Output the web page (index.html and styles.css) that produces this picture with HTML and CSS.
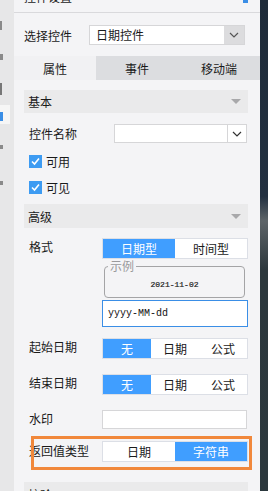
FILE: index.html
```html
<!DOCTYPE html>
<html>
<head>
<meta charset="utf-8">
<link rel="stylesheet" href="styles.css">
</head>
<body>
<div class="app">
  <div class="sidebar">
    <div class="sb-mark m1"></div>
    <div class="sb-mark m2"></div>
    <div class="sb-mark m3"></div>
    <div class="sb-active"><div class="sb-blue"></div></div>
    <div class="sb-mark m4"></div>
    <div class="sb-mark m5"></div>
  </div>
  <div class="panel">
    <div class="title"><span>控件设置</span><i class="title-icon"></i></div>
    <div class="select-row">
      <span class="select-label">选择控件</span>
      <div class="select">
        <span class="select-text">日期控件</span>
        <span class="select-btn"><svg width="10" height="6" viewBox="0 0 10 6"><path d="M1 1 L5 5 L9 1" fill="none" stroke="#555" stroke-width="1.2"/></svg></span>
      </div>
    </div>
    <div class="tabs">
      <div class="tab active">属性</div>
      <div class="tab">事件</div>
      <div class="tab">移动端</div>
    </div>
    <div class="content">
      <div class="section-head"><span>基本</span><i class="tri"></i></div>
      <div class="row-name">
        <span class="label">控件名称</span>
        <div class="combo">
          <span class="combo-btn"><svg width="10" height="6" viewBox="0 0 10 6"><path d="M1 1 L5 5 L9 1" fill="none" stroke="#333" stroke-width="1.2"/></svg></span>
        </div>
      </div>
      <div class="check c1"><span class="box"><svg width="13" height="13" viewBox="0 0 13 13"><path d="M3 6.5 L5.5 9 L10 3.5" fill="none" stroke="#fff" stroke-width="1.6"/></svg></span>可用</div>
      <div class="check c2"><span class="box"><svg width="13" height="13" viewBox="0 0 13 13"><path d="M3 6.5 L5.5 9 L10 3.5" fill="none" stroke="#fff" stroke-width="1.6"/></svg></span>可见</div>

      <div class="section-head adv"><span>高级</span><i class="tri"></i></div>

      <div class="row r-format">
        <span class="label">格式</span>
        <div class="ctrl">
          <div class="seg two">
            <span class="on">日期型</span><span>时间型</span>
          </div>
          <fieldset class="example">
            <legend>示例</legend>
            <div class="example-date">2021-11-02</div>
          </fieldset>
          <div class="pattern">yyyy-MM-dd</div>
        </div>
      </div>

      <div class="row r-start">
        <span class="label">起始日期</span>
        <div class="ctrl">
          <div class="seg three"><span class="on">无</span><span>日期</span><span>公式</span></div>
        </div>
      </div>

      <div class="row r-end">
        <span class="label">结束日期</span>
        <div class="ctrl">
          <div class="seg three"><span class="on">无</span><span>日期</span><span>公式</span></div>
        </div>
      </div>

      <div class="row r-water">
        <span class="label">水印</span>
        <div class="ctrl"><div class="text-input"></div></div>
      </div>

      <div class="row r-return">
        <span class="label">返回值类型</span>
        <div class="ctrl">
          <div class="seg two"><span>日期</span><span class="on">字符串</span></div>
        </div>
        <div class="highlight"></div>
      </div>

      <div class="section-head check-head"><span>校验</span></div>
    </div>
  </div>
  <div class="strip"></div>
</div>
</body>
</html>
```
FILE: styles.css
```css
* { box-sizing: border-box; }
html, body { margin: 0; padding: 0; }
body {
  width: 268px;
  height: 491px;
  overflow: hidden;
  font-family: "Noto Sans CJK SC", "Noto Sans", sans-serif;
  font-size: 12px;
  color: #1a1a1a;
  background: #f4f4f6;
}
.app { display: flex; height: 491px; overflow: hidden; }

.sidebar {
  width: 14px;
  flex: none;
  background: #e7e7e8;
  display: flex;
  flex-direction: column;
}
.sb-mark { width: 3px; background: #8a8a8a; flex: none; }
.m1 { height: 9px; margin-top: 21px; width: 2px; }
.m2 { height: 6px; margin-top: 24px; }
.m3 { height: 12px; margin-top: 23px; width: 2px; background: #777; }
.sb-active {
  margin-top: 10px;
  width: 10px;
  height: 19px;
  background: #f6f6f6;
  padding-top: 7px;
  flex: none;
}
.sb-blue { width: 3px; height: 9px; background: #3a8ee6; }
.m4 { height: 4px; margin-top: 21px; }
.m5 { height: 4px; margin-top: 32px; }

.panel {
  width: 246px;
  flex: none;
  background: #f4f4f6;
  display: block;
  overflow: hidden;
  height: 491px;
}
.strip {
  width: 8px;
  flex: none;
  background: linear-gradient(#1e2b39 0%, #223040 40%, #5d6468 45%, #2c373c 55%, #2b383d 100%);
}

.title {
  height: 13px;
  border-bottom: 1px solid #d9d9dc;
  overflow: hidden;
  padding-left: 10px;
  position: relative;
}
.title span {
  display: block;
  margin-top: -10px;
  line-height: 14px;
  font-size: 12px;
}
.title-icon {
  position: absolute;
  right: 12px;
  top: 0;
  width: 5px;
  height: 3px;
  background: #3a8ee6;
}

.select-row {
  display: flex;
  align-items: center;
  padding: 12px 0 11px 10px;
}
.select-label { width: 65px; font-size: 12px; }
.select {
  width: 156px;
  height: 20px;
  border: 1px solid #d6d6d8;
  background: #fff;
  display: flex;
}
.select-text { flex: 1; padding-left: 6px; line-height: 18px; }
.select-btn {
  width: 20px;
  background: #dcdcde;
  display: flex;
  align-items: center;
  justify-content: center;
}

.tabs { display: flex; height: 24px; background: #dcdde0; }
.tab {
  width: 82px;
  display: flex;
  align-items: center;
  justify-content: center;
}
.tab.active { background: #f1f1f3; }

.content { padding: 10px 12px 0 10px; }

.section-head {
  height: 23px;
  background: #eaeaeb;
  display: flex;
  align-items: center;
  justify-content: space-between;
  padding: 0 7px 0 4px;
}
.section-head.adv { margin-top: 10px; height: 24px; }
.section-head.check-head { margin-top: 20px; align-items: flex-start; padding-top: 4px; }
.tri {
  width: 0;
  height: 0;
  border-left: 5px solid transparent;
  border-right: 5px solid transparent;
  border-top: 5px solid #a8a8aa;
}

.row-name {
  margin-top: 11px;
  display: flex;
  align-items: center;
}
.row-name .label { width: 90px; padding-left: 5px; }
.combo {
  width: 133px;
  height: 19px;
  background: #fff;
  border: 1px solid #d6d6d8;
  display: flex;
  justify-content: flex-end;
}
.combo-btn {
  width: 19px;
  border-left: 1px solid #d6d6d8;
  display: flex;
  align-items: center;
  justify-content: center;
}

.check {
  display: flex;
  align-items: center;
  height: 13px;
  padding-left: 5px;
  gap: 4px;
}
.check.c1 { margin-top: 12px; }
.check.c2 { margin-top: 13px; }
.box {
  width: 13px;
  height: 13px;
  background: #3d9bf2;
  display: block;
}
.box svg { display: block; }

.row {
  display: flex;
  align-items: flex-start;
  position: relative;
}
.row .label { width: 78px; padding-left: 5px; line-height: 18px; }
.ctrl { width: 146px; }
.r-format { margin-top: 10px; }
.r-start { margin-top: 11px; }
.r-end { margin-top: 15px; }
.r-water { margin-top: 15px; }
.r-return { margin-top: 12px; }
.r-return .label { line-height: 20px; }

.seg {
  display: flex;
  height: 21px;
  border: 1px solid #dcdfe6;
  background: #fff;
}
.seg span {
  display: flex;
  align-items: center;
  justify-content: center;
  flex: 1;
}
.seg .on { background: #409eff; color: #fff; }

.example {
  margin: 1px 3px 0 2px;
  padding: 0;
  height: 38px;
  border: 1px solid #a4a4a6;
  border-radius: 4px;
  min-width: 0;
}
.example legend {
  margin-left: 3px;
  padding: 0 2px;
  color: #9a9a9c;
  font-size: 12px;
  line-height: 12px;
}
.example-date {
  text-align: center;
  font-family: "Liberation Mono", monospace;
  font-size: 8px;
  color: #222;
  line-height: 10px;
  margin-top: 8px;
  -webkit-text-stroke: 0.2px #222;
}
.pattern {
  margin-top: 2px;
  height: 27px;
  border: 1px solid #3a8ee6;
  background: #fff;
  font-family: "Liberation Mono", monospace;
  font-size: 10px;
  line-height: 25px;
  padding-left: 5px;
  color: #111;
}

.text-input {
  height: 19px;
  border: 1px solid #d6d6d8;
  background: #fff;
  width: 145px;
}

.highlight {
  position: absolute;
  left: 7px;
  right: -4px;
  top: -5px;
  bottom: -8px;
  border: 3px solid #f1883b;
  pointer-events: none;
}
```
